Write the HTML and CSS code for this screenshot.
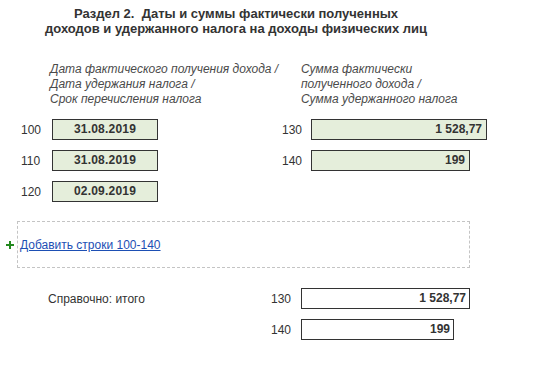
FILE: index.html
```html
<!DOCTYPE html>
<html lang="ru">
<head>
<meta charset="utf-8">
<link rel="stylesheet" href="styles.css">
</head>
<body>
<div class="page">
  <h1 class="title">Раздел 2.&nbsp; Даты и суммы фактически полученных<br>доходов и удержанного налога на доходы физических лиц</h1>

  <div class="heads">
    <div class="head head-left">Дата фактического получения дохода /<br>Дата удержания налога /<br>Срок перечисления налога</div>
    <div class="head head-right">Сумма фактически<br>полученного дохода /<br>Сумма удержанного налога</div>
  </div>

  <div class="rows">
    <div class="row">
      <div class="grp grp-left"><span class="lab">100</span><div class="fld fld-date">31.08.2019</div></div>
      <div class="grp grp-right"><span class="lab lab-r">130</span><div class="fld fld-num fld-w1">1 528,77</div></div>
    </div>
    <div class="row">
      <div class="grp grp-left"><span class="lab">110</span><div class="fld fld-date">31.08.2019</div></div>
      <div class="grp grp-right"><span class="lab lab-r">140</span><div class="fld fld-num fld-w2">199</div></div>
    </div>
    <div class="row">
      <div class="grp grp-left"><span class="lab">120</span><div class="fld fld-date">02.09.2019</div></div>
    </div>
  </div>

  <div class="add-row">
    <svg class="plus" width="8" height="8" viewBox="0 0 8 8"><rect x="3" y="0" width="2" height="8" fill="#23891f"/><rect x="0" y="3" width="8" height="2" fill="#23891f"/></svg>
    <div class="add-box"><a href="#" class="add-link">Добавить строки 100-140</a></div>
  </div>

  <div class="totals">
    <div class="trow">
      <span class="tcap">Справочно: итого</span>
      <span class="lab tlab">130</span>
      <div class="fld fld-num fld-white fld-t1">1 528,77</div>
    </div>
    <div class="trow">
      <span class="tcap"></span>
      <span class="lab tlab">140</span>
      <div class="fld fld-num fld-white fld-t2">199</div>
    </div>
  </div>
</div>
</body>
</html>
```

FILE: styles.css
```css
* { box-sizing: border-box; }
html, body { margin: 0; padding: 0; background: #fff; }
body {
  font-family: "Liberation Sans", Arial, sans-serif;
  color: #333;
  font-size: 12px;
}
.page { width: 541px; height: 367px; overflow: hidden; }

.title {
  margin: 0;
  padding-top: 6px;
  width: 472px;
  text-align: center;
  font-size: 13px;
  font-weight: bold;
  line-height: 15px;
  color: #333;
}

.heads {
  display: flex;
  margin-top: 26px;
}
.head {
  font-style: italic;
  font-size: 12px;
  line-height: 15px;
  color: #4a4a4a;
}
.head-left { width: 301px; padding-left: 50px; }
.head-right { flex: 1; }

.rows {
  margin-top: 12px;
  padding-left: 21px;
  display: flex;
  flex-direction: column;
  gap: 10px;
}
.row { display: flex; height: 21px; }
.grp { display: flex; align-items: center; }
.grp-left { width: 261px; }
.lab {
  display: inline-block;
  width: 31px;
  font-size: 12px;
  color: #333;
}
.lab-r { width: 29px; }

.fld {
  height: 21px;
  border: 1px solid #333;
  background: #e5eedb;
  font-weight: bold;
  font-size: 12px;
  line-height: 19px;
  color: #333;
}
.fld-date { width: 106px; text-align: center; letter-spacing: 0.2px; }
.fld-num { text-align: right; padding-right: 4px; }
.fld-w1 { width: 176px; }
.fld-w2 { width: 159px; }
.fld-white { background: #fff; padding-right: 3px; }

.add-row {
  display: flex;
  align-items: center;
  margin-top: 19px;
  padding-left: 6px;
}
.plus { display: block; margin-right: 3px; }
.add-box {
  width: 453px;
  height: 47px;
  border: 1px dashed #c4c4c4;
  display: flex;
  align-items: center;
  padding-left: 2px;
}
.add-link {
  color: #1d4fb4;
  text-decoration: underline;
  font-size: 12px;
}

.totals {
  margin-top: 20px;
  display: flex;
  flex-direction: column;
  gap: 10px;
}
.trow { display: flex; align-items: center; height: 21px; }
.tcap { width: 271px; padding-left: 48px; font-size: 12px; color: #333; }
.tlab { width: 30px; }
.fld-t1 { width: 169px; }
.fld-t2 { width: 153px; }
```
